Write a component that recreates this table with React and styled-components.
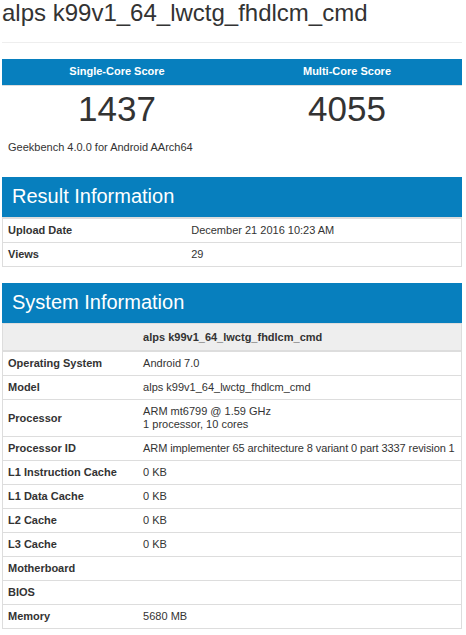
import React from "react";
import styled, { createGlobalStyle } from "styled-components";

const GlobalStyle = createGlobalStyle`
  html, body {
    margin: 0;
    padding: 0;
    background: #fff;
  }
  body {
    font-family: "Liberation Sans", Arial, Helvetica, sans-serif;
    color: #333;
    font-size: 11px;
    line-height: 13px;
  }
`;

const BLUE = "#077fbe";

const Page = styled.div`
  padding: 1px 4px 0 2px;
`;

const Title = styled.h1`
  margin: 0;
  font-size: 24px;
  line-height: 24px;
  font-weight: normal;
  color: #333;
`;

const Rule = styled.hr`
  margin: 17px 0 16px;
  border: 0;
  border-top: 1px solid #eee;
`;

const ScoreGrid = styled.div`
  display: grid;
  grid-template-columns: 1fr 1fr;
`;

const ScoreLabel = styled.div`
  background: ${BLUE};
  color: #fff;
  font-weight: bold;
  text-align: center;
  padding: 6px 0 7px;
  border-bottom: 1px solid #ddd;
`;

const ScoreValue = styled.div`
  text-align: center;
  font-size: 35px;
  line-height: 40px;
  padding-top: 3px;
  color: #333;
`;

const Version = styled.div`
  margin: 12px 0 0 6px;
`;

const SectionHead = styled.h2`
  margin: ${(p) => p.$top}px 0 0;
  background: ${BLUE};
  color: #fff;
  font-size: 20px;
  font-weight: normal;
  height: 40px;
  line-height: 39px;
  padding: 0 10px;
`;

const Table = styled.table`
  width: 100%;
  border: 1px solid #ddd;
  border-spacing: 0;
  table-layout: fixed;

  th,
  td {
    box-sizing: border-box;
  }
`;

const HeadCell = styled.th`
  width: ${(p) => p.$w || "auto"};
  background: #eee;
  text-align: left;
  font-weight: bold;
  padding: 7px 5px 6px;
  border-bottom: 2px solid #ddd;
  line-height: 13px;
`;

const Label = styled.td`
  width: ${(p) => p.$w};
  font-weight: bold;
  padding: 5px;
  border-top: ${(p) => (p.$first ? "0" : "1px solid #ddd")};
  vertical-align: middle;
`;

const Value = styled.td`
  padding: 5px;
  border-top: ${(p) => (p.$first ? "0" : "1px solid #ddd")};
  white-space: nowrap;
  vertical-align: middle;
  letter-spacing: ${(p) => (p.$tight ? "-0.1px" : "0")};
`;

const resultRows = [
  ["Upload Date", "December 21 2016 10:23 AM"],
  ["Views", "29"],
];

const systemRows = [
  ["Operating System", "Android 7.0"],
  ["Model", "alps k99v1_64_lwctg_fhdlcm_cmd"],
  ["Processor", ["ARM mt6799 @ 1.59 GHz", "1 processor, 10 cores"]],
  ["Processor ID", "ARM implementer 65 architecture 8 variant 0 part 3337 revision 1"],
  ["L1 Instruction Cache", "0 KB"],
  ["L1 Data Cache", "0 KB"],
  ["L2 Cache", "0 KB"],
  ["L3 Cache", "0 KB"],
  ["Motherboard", ""],
  ["BIOS", ""],
  ["Memory", "5680 MB"],
];

function renderValue(v) {
  if (Array.isArray(v)) {
    return v.map((line, i) => (
      <React.Fragment key={i}>
        {i > 0 && <br />}
        {line}
      </React.Fragment>
    ));
  }
  return v;
}

export default function App() {
  return (
    <Page>
      <GlobalStyle />
      <Title>alps k99v1_64_lwctg_fhdlcm_cmd</Title>
      <Rule />

      <ScoreGrid>
        <ScoreLabel>Single-Core Score</ScoreLabel>
        <ScoreLabel>Multi-Core Score</ScoreLabel>
        <ScoreValue>1437</ScoreValue>
        <ScoreValue>4055</ScoreValue>
      </ScoreGrid>
      <Version>Geekbench 4.0.0 for Android AArch64</Version>

      <SectionHead $top={23}>Result Information</SectionHead>
      <Table>
        <tbody>
          {resultRows.map(([k, v]) => (
            <tr key={k}>
              <Label $w="40%">{k}</Label>
              <Value>{v}</Value>
            </tr>
          ))}
        </tbody>
      </Table>

      <SectionHead $top={16}>System Information</SectionHead>
      <Table>
        <thead>
          <tr>
            <HeadCell $w="29.5%"></HeadCell>
            <HeadCell>alps k99v1_64_lwctg_fhdlcm_cmd</HeadCell>
          </tr>
        </thead>
        <tbody>
          {systemRows.map(([k, v], i) => (
            <tr key={k}>
              <Label $w="29.5%" $first={i === 0}>
                {k}
              </Label>
              <Value $first={i === 0} $tight={k === "Processor ID"}>
                {renderValue(v)}
              </Value>
            </tr>
          ))}
        </tbody>
      </Table>
    </Page>
  );
}
